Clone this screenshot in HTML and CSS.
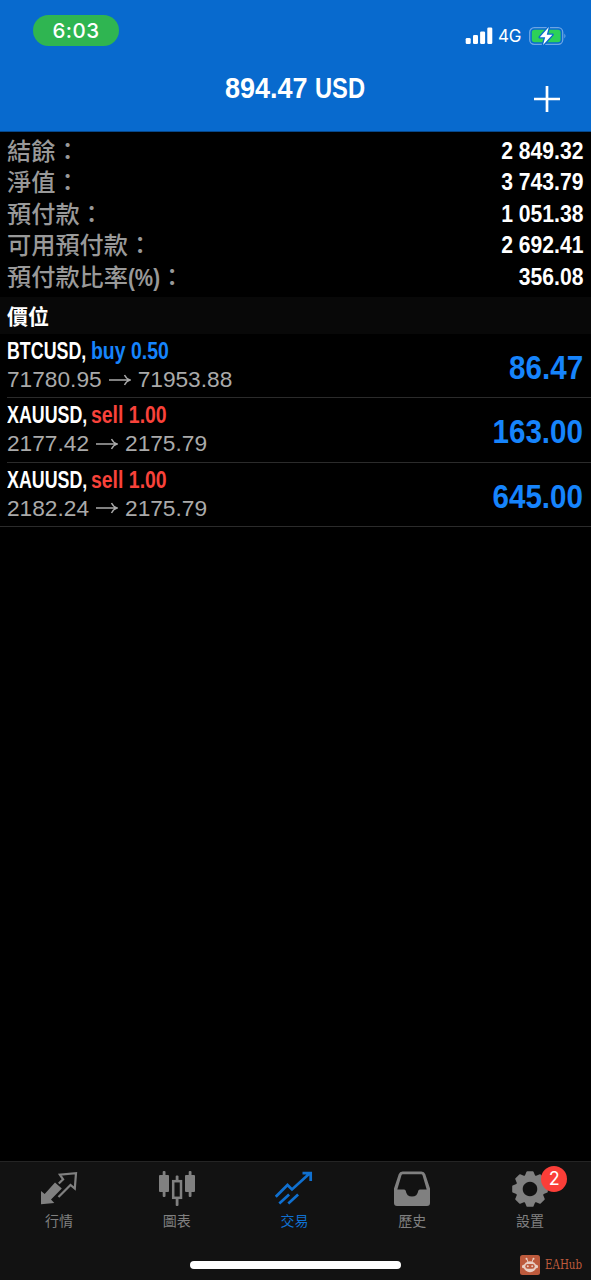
FILE: index.html
```html
<!DOCTYPE html>
<html lang="zh-Hant">
<head>
    <meta charset="UTF-8">
    <meta name="viewport" content="width=device-width, initial-scale=1.0">
    <title>交易</title>
    <link rel="stylesheet" href="styles.css">
</head>
<body>
    <div class="app">
        <header class="header">
            <div class="status-bar">
                <div class="clock">6:03</div>
                <div class="status-icons">
                    <svg width="28" height="18" viewBox="0 0 28 18" fill="#fff">
                        <rect x="0.7" y="11" width="5" height="6" rx="1.3"/>
                        <rect x="8" y="8" width="5" height="9" rx="1.3"/>
                        <rect x="15.1" y="4.5" width="5" height="12.5" rx="1.3"/>
                        <rect x="22.3" y="0.5" width="5" height="16.5" rx="1.3"/>
                    </svg>
                    <span class="network">4G</span>
                    <svg class="battery" width="38" height="20" viewBox="0 0 38 20">
                        <rect x="0.7" y="1.7" width="33" height="16.6" rx="4.5" fill="none" stroke="#6ba5e4" stroke-width="1.3"/>
                        <path d="M35.3 7.5q2.4 2.5 0 5z" fill="#6ba5e4"/>
                        <rect x="2.8" y="3.8" width="28.8" height="12.4" rx="2.6" fill="#2dd158"/>
                        <path d="M19.8 1L10.8 11.2h5.4L14 19l9.4-10.3h-5.6z" fill="#fff" stroke="#086ace" stroke-width="2.6" paint-order="stroke" stroke-linejoin="round"/>
                    </svg>
                </div>
            </div>
            <div class="title-bar">
                <h1 class="title"><span class="narrow title-sum">894.47</span><span class="narrow title-cur">USD</span></h1>
                <svg class="add" width="26" height="26" viewBox="0 0 26 26" stroke="#fff" stroke-width="2.7">
                    <path d="M13 0v26M0 13h26"/>
                </svg>
            </div>
        </header>

        <!-- Account summary -->
        <section class="summary">
            <div class="summary-row"><span class="label">結餘：</span><span class="value">2 849.32</span></div>
            <div class="summary-row"><span class="label">淨值：</span><span class="value">3 743.79</span></div>
            <div class="summary-row"><span class="label">預付款：</span><span class="value">1 051.38</span></div>
            <div class="summary-row"><span class="label">可用預付款：</span><span class="value">2 692.41</span></div>
            <div class="summary-row"><span class="label">預付款比率<span class="narrow percent">(%)</span>：</span><span class="value">356.08</span></div>
        </section>

        <!-- Open positions -->
        <h2 class="section-title">價位</h2>
        <section class="positions">
            <div class="position">
                <div class="details">
                    <div class="order"><span class="narrow symbol">BTCUSD,</span><span class="narrow side buy">buy 0.50</span></div>
                    <div class="prices"><span>71780.95</span>
                        <svg class="arrow" width="22" height="14" viewBox="0 0 22 14"><path d="M0 7h21M15.5 2q2 4 5.5 5q-3.5 1-5.5 5"/></svg>
                        <span>71953.88</span></div>
                </div>
                <div class="profit">86.47</div>
            </div>
            <div class="position">
                <div class="details">
                    <div class="order"><span class="narrow symbol">XAUUSD,</span><span class="narrow side sell">sell 1.00</span></div>
                    <div class="prices"><span>2177.42</span>
                        <svg class="arrow" width="22" height="14" viewBox="0 0 22 14"><path d="M0 7h21M15.5 2q2 4 5.5 5q-3.5 1-5.5 5"/></svg>
                        <span>2175.79</span></div>
                </div>
                <div class="profit">163.00</div>
            </div>
            <div class="position">
                <div class="details">
                    <div class="order"><span class="narrow symbol">XAUUSD,</span><span class="narrow side sell">sell 1.00</span></div>
                    <div class="prices"><span>2182.24</span>
                        <svg class="arrow" width="22" height="14" viewBox="0 0 22 14"><path d="M0 7h21M15.5 2q2 4 5.5 5q-3.5 1-5.5 5"/></svg>
                        <span>2175.79</span></div>
                </div>
                <div class="profit">645.00</div>
            </div>
        </section>

        <footer class="footer">
            <nav class="tabs">
                <div class="tab">
                    <svg width="38" height="36" viewBox="0 0 38 36">
                        <path d="M1 33.300V20l3.700 3L15 11.500l6.800 6L11 28.500l3.300 3.500z" fill="#808080"/>
                        <path d="M18.800 12.500l4.300-4.200-3.200-4.600L36 2.200 34.800 17.500l-4.300-3.500L18.500 26" fill="none" stroke="#808080" stroke-width="2.200"/>
                    </svg>
                    <span>行情</span>
                </div>
                <div class="tab">
                    <svg width="38" height="36" viewBox="0 0 38 36" fill="#808080">
                        <rect x="1" y="4" width="10" height="17" rx="1"/>
                        <rect x="4.700" y="0" width="2.800" height="26" rx="1"/>
                        <rect x="27" y="4" width="10" height="17" rx="1"/>
                        <rect x="30.700" y="0" width="2.800" height="26" rx="1"/>
                        <rect x="15.200" y="10.200" width="7.800" height="16.600" fill="none" stroke="#808080" stroke-width="2.500"/>
                        <rect x="17.700" y="4.500" width="2.800" height="5.500" rx="1"/>
                        <rect x="17.700" y="27" width="2.800" height="8" rx="1"/>
                    </svg>
                    <span>圖表</span>
                </div>
                <div class="tab active">
                    <svg width="38" height="36" viewBox="0 0 38 36" fill="none" stroke="#1070d0" stroke-width="2.700">
                        <path d="M0.800 25.700L12.500 14l4.500 4.500L34.800 2.300M27.500 2.200H35.700V10"/>
                        <path d="M4.300 32.500l9.800-9M13.300 32.500l9.800-9"/>
                    </svg>
                    <span>交易</span>
                </div>
                <div class="tab">
                    <svg width="38" height="36" viewBox="0 0 38 36" fill="#808080">
                        <path fill-rule="evenodd" d="M9.500 0.500h19q2.800 0 3.800 2.800L37 17.500V32q0 3-3 3H4q-3 0-3-3V17.500L5.700 3.300Q6.700.5 9.500.5zM8.500 4.200L4.300 18.500h6.800q1.500 0 1.700 1.500q.8 5.500 6.200 5.500t6.200-5.500q.2-1.500 1.700-1.500h6.800L29.500 4.200q-.3-1-1.300-1H9.800q-1 0-1.300 1z"/>
                    </svg>
                    <span>歷史</span>
                </div>
                <div class="tab">
                    <svg width="38" height="36" viewBox="-19 -18 38 36">
                        <g fill="#808080">
                            <path fill-rule="evenodd" d="M0-14.500a14.500 14.500 0 1 0 .01 0zM0-7.300a7.300 7.300 0 1 1-.01 0z"/>
                            <path id="tooth" d="M-5.500-12.500L-3.500-17.300q.2-.5.800-.5h5.400q.6 0 .8.500L5.500-12.500z"/>
                            <use href="#tooth" transform="rotate(45)"/>
                            <use href="#tooth" transform="rotate(90)"/>
                            <use href="#tooth" transform="rotate(135)"/>
                            <use href="#tooth" transform="rotate(180)"/>
                            <use href="#tooth" transform="rotate(225)"/>
                            <use href="#tooth" transform="rotate(270)"/>
                            <use href="#tooth" transform="rotate(315)"/>
                        </g>
                    </svg>
                    <span>設置</span>
                    <b class="badge">2</b>
                </div>
            </nav>
            <div class="home-indicator"></div>
            <div class="brand">
                <svg width="20" height="20" viewBox="0 0 20 20">
                    <rect width="20" height="20" rx="2.500" fill="#bd5a3c"/>
                    <path d="M8 7L6.800 4M12 7l1.200-3" stroke="#e9cfc5" stroke-width="1"/>
                    <circle cx="6.500" cy="3.800" r="1" fill="#e9cfc5"/>
                    <circle cx="13.500" cy="3.800" r="1" fill="#e9cfc5"/>
                    <ellipse cx="10" cy="11.700" rx="6.200" ry="5.500" fill="#e9cfc5"/>
                    <rect x="2" y="9.700" width="16" height="3.600" rx="1.500" fill="#e9cfc5"/>
                    <rect x="5.300" y="9" width="9.400" height="4.800" rx="2.400" fill="#bd5a3c"/>
                    <circle cx="7.800" cy="11.300" r="1" fill="#e9cfc5"/>
                    <circle cx="12.200" cy="11.300" r="1" fill="#e9cfc5"/>
                </svg>
                <span class="narrow brand-name">EAHub</span>
            </div>
        </footer>
    </div>
</body>
</html>
```
FILE: styles.css
```css
* {
    box-sizing: border-box;
}
body {
    margin: 0;
    background: #000;
    color: #fff;
    font-family: "Liberation Sans", "Noto Sans CJK TC", sans-serif;
}
h1, h2 {
    margin: 0;
}
svg {
    display: block;
    flex-shrink: 0;
}
.app {
    display: flex;
    flex-direction: column;
    width: 591px;
    height: 1280px;
    overflow: hidden;
}

/* Condensed lettering: the box has its final width, the text is squeezed into it */
.narrow {
    display: inline-block;
    white-space: nowrap;
    transform-origin: left center;
}

.header {
    height: 132px;
    background: #086ace;
    border-bottom: 1px solid #06478a;
}
.status-bar {
    display: flex;
    justify-content: space-between;
    height: 60px;
    padding: 15px 24px 0 33px;
}
.clock {
    width: 86px;
    height: 31px;
    border-radius: 16px;
    background: #2fb551;
    font: 500 20.5px/31px Inter, sans-serif;
    letter-spacing: 0.5px;
    text-align: center;
}
.status-icons {
    display: flex;
    align-items: center;
    height: 42px;
}
.network {
    width: 24px;
    margin: 0 7px 0 5px;
    font: 400 17px/20px Inter, sans-serif;
    letter-spacing: -0.3px;
}
.title-bar {
    display: grid;
    grid-template-columns: 1fr 141px 1fr;
    padding: 10px 31px 0 30px;
}
.title {
    grid-column: 2;
    display: flex;
    height: 36px;
    font-size: 30px;
    line-height: 36px;
}
.title-sum {
    width: 90px;
    transform: scaleX(0.9);
}
.title-cur {
    width: 51px;
    transform: scaleX(0.79);
}
.add {
    justify-self: end;
    margin-top: 16px;
}

.summary {
    height: 165px;
    padding: 3px 8px 0 7px;
}
.summary-row {
    display: flex;
    justify-content: space-between;
    height: 31.4px;
    line-height: 31.4px;
}
.label {
    margin-top: -1px;
    color: #999;
    font-family: "Noto Sans CJK TC", sans-serif;
    font-size: 24.2px;
    font-weight: 500;
}
.percent {
    width: 32px;
    font-family: "Liberation Sans", sans-serif;
    font-weight: 700;
    transform: scaleX(0.85);
}
.value {
    font-size: 24px;
    font-weight: 700;
    transform: scaleX(0.88);
    transform-origin: right center;
}

.section-title {
    height: 37px;
    padding-left: 7px;
    background: #080808;
    font: 700 21px/36px "Noto Sans CJK TC", sans-serif;
}

.position {
    display: flex;
    justify-content: space-between;
    height: 64.4px;
    margin-left: 7px;
    padding: 3px 8px 0 0;
    border-bottom: 1px solid #2b2b2b;
}
.position:last-child {
    margin-left: 0;
    padding-left: 7px;
}
.order {
    display: flex;
    height: 28px;
    font-size: 23px;
    font-weight: 700;
    line-height: 29px;
}
.symbol {
    width: 83.5px;
    transform: scaleX(0.775);
}
.side {
    transform: scaleX(0.845);
}
.buy {
    color: #1684fc;
}
.sell {
    color: #f9423a;
}
.prices {
    display: flex;
    align-items: center;
    gap: 7px;
    height: 29px;
    color: #aaa;
    font-size: 22.7px;
    line-height: 29px;
}
.arrow {
    fill: none;
    stroke: #aaa;
    stroke-width: 1.4;
}
.profit {
    color: #1684fc;
    font-size: 34px;
    font-weight: 700;
    line-height: 60px;
    transform: scaleX(0.87);
    transform-origin: right center;
}

.footer {
    position: relative;
    height: 119px;
    margin-top: auto;
    border-top: 1px solid #242424;
    background: #121212;
}
.tabs {
    display: grid;
    grid-template-columns: repeat(5, 1fr);
    height: 99px;
    margin-right: 2px;
    padding-top: 9px;
}
.tab {
    position: relative;
    display: flex;
    flex-direction: column;
    align-items: center;
    color: #808080;
    font: 400 14px/20px "Noto Sans CJK TC", sans-serif;
}
.tab span {
    margin-top: 3px;
}
.tab.active {
    color: #1070d0;
}
.badge {
    position: absolute;
    top: -5px;
    left: 70px;
    width: 26px;
    height: 26px;
    border-radius: 50%;
    background: #fb3e38;
    color: #fff;
    font: 400 18px/26px Inter, sans-serif;
    text-align: center;
}
.home-indicator {
    width: 211px;
    height: 8px;
    margin: 0 auto;
    border-radius: 4px;
    background: #fff;
}
/* Watermark over the corner of the tab bar */
.brand {
    position: absolute;
    right: 9px;
    bottom: 5px;
    display: flex;
    align-items: center;
    gap: 5px;
    color: #bd5a3c;
    font: 400 13px/20px "DejaVu Serif", serif;
}
.brand-name {
    width: 37px;
    transform: scaleX(0.79);
}
```
